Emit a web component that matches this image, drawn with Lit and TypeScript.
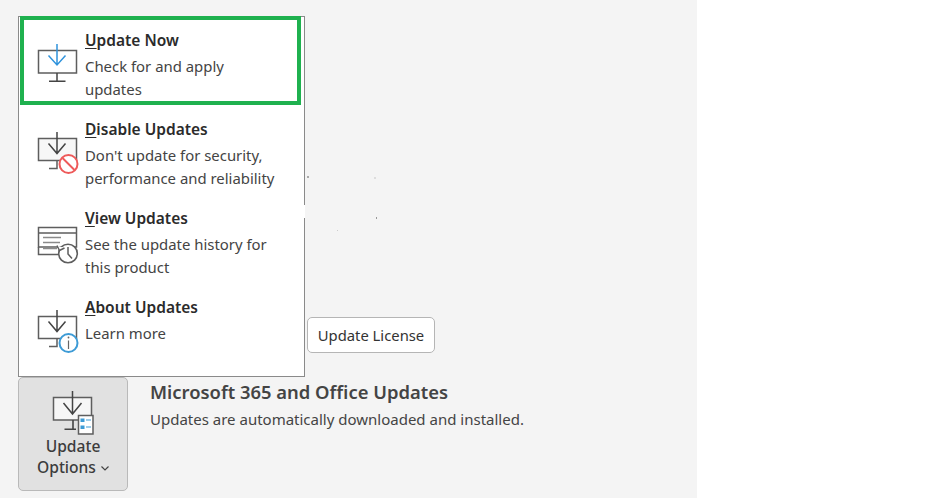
import { LitElement, html, css, svg } from "lit";
import { customElement } from "lit/decorators.js";

const GRAY = "#5e5e5e";
const DARK = "#444";

const iconNow = svg`
  <path d="M2.5 10.5H40.5V33H2.5Z" fill="#fff" stroke="${GRAY}" stroke-width="1.5"/>
  <path d="M21 33V41M13 41.3H29.5" fill="none" stroke="${DARK}" stroke-width="1.5"/>
  <path d="M21 4V25M12.5 15.5L21 25L29.5 15.5" fill="none" stroke="#2f93dc" stroke-width="1.5"/>`;

const iconDisable = svg`
  <path d="M2.5 9.5H40.5V31.5H2.5Z" fill="#f7f7f7" stroke="${GRAY}" stroke-width="1.5"/>
  <path d="M21 31.5V39.5H13" fill="none" stroke="${GRAY}" stroke-width="1.5"/>
  <path d="M21 3V24.5M12.5 14.5L21 24.5L29.5 14.5" fill="none" stroke="${DARK}" stroke-width="1.5"/>
  <circle cx="32.5" cy="35" r="9" fill="#fff" stroke="#ee5a5a" stroke-width="2"/>
  <path d="M26.5 29L38.5 41" stroke="#ee5a5a" stroke-width="2"/>`;

const iconView = svg`
  <path d="M2.5 9.5H40.5V29H2.5ZM2.5 15H40.5" fill="#fff" stroke="${GRAY}" stroke-width="1.5"/>
  <path d="M2.5 29V36.5H24" fill="none" stroke="${GRAY}" stroke-width="1.5"/>
  <path d="M7 19.5H25M7 24.5H24M7 30.5H21" fill="none" stroke="#8a8a8a" stroke-width="1.4"/>
  <circle cx="32" cy="35.5" r="9.3" fill="#fff" stroke="${GRAY}" stroke-width="1.6"/>
  <path d="M21 27.5L23.5 32.5L28.5 30" fill="#fff" stroke="${GRAY}" stroke-width="1.4"/>
  <path d="M32 29V36L36 40.5" fill="none" stroke="${GRAY}" stroke-width="1.5"/>`;

const iconAbout = svg`
  <path d="M2.5 9.5H40.5V31.5H2.5Z" fill="#fff" stroke="${GRAY}" stroke-width="1.5"/>
  <path d="M21 31.5V39.5H13" fill="none" stroke="${GRAY}" stroke-width="1.5"/>
  <path d="M21 3V24.5M12.5 14.5L21 24.5L29.5 14.5" fill="none" stroke="${DARK}" stroke-width="1.5"/>
  <circle cx="32.5" cy="36" r="9" fill="#fff" stroke="#3d9bd6" stroke-width="2"/>
  <path d="M32.5 33.5V42" stroke="#666" stroke-width="1.2"/>
  <circle cx="32.5" cy="30.5" r="0.9" fill="#666"/>`;

const iconOptions = svg`
  <path d="M1.5 7.5H39.5V30H1.5Z" fill="#f6f6f6" stroke="${GRAY}" stroke-width="1.5"/>
  <path d="M20.5 1V24M11.5 13L20.5 24L29.5 13" fill="none" stroke="${DARK}" stroke-width="1.5"/>
  <path d="M21 30V39M12.5 39.3H24" fill="none" stroke="${DARK}" stroke-width="1.6"/>
  <path d="M26.5 25.5H41V44H26.5Z" fill="#fff" stroke="${GRAY}" stroke-width="1.5"/>
  <path d="M28.5 28.5H32.5V32H28.5ZM28.5 35.5H32.5V39H28.5Z" fill="#3d9bd6"/>
  <path d="M34 30H39M34 37H39" stroke="#3d9bd6" stroke-width="1.2"/>`;

const items = [
  { key: "U", rest: "pdate Now", desc: "Check for and apply updates", icon: iconNow },
  { key: "D", rest: "isable Updates", desc: "Don't update for security, performance and reliability", icon: iconDisable },
  { key: "V", rest: "iew Updates", desc: "See the update history for this product", icon: iconView },
  { key: "A", rest: "bout Updates", desc: "Learn more", icon: iconAbout },
];

const specks = [
  { x: 307, y: 176, w: 2, h: 2, c: "#aaa" },
  { x: 374, y: 177, w: 2, h: 2, c: "#ddd" },
  { x: 376, y: 217, w: 1, h: 2, c: "#999" },
  { x: 337, y: 230, w: 1, h: 1, c: "#ccc" },
];

@customElement("app-root")
export class AppRoot extends LitElement {
  static styles = css`
    :host {
      display: block;
      position: relative;
      width: 936px;
      height: 498px;
      overflow: hidden;
      background: #fff;
      font-family: "Noto Sans", "Open Sans", sans-serif;
      color: #404040;
    }
    .panel {
      box-sizing: border-box;
      width: 697px;
      height: 498px;
      background: #f4f4f4;
      padding: 317px 0 0 18px;
      display: flex;
      flex-direction: column;
    }
    .license {
      box-sizing: border-box;
      align-self: flex-start;
      margin-left: 289px;
      width: 128px;
      height: 36px;
      background: #fff;
      border: 1px solid #b5b5b5;
      border-radius: 5px;
      font: inherit;
      font-size: 14.8px;
      color: #333;
      padding: 0;
    }
    .row {
      display: flex;
      margin-top: 24px;
      gap: 22px;
    }
    .options {
      box-sizing: border-box;
      width: 110px;
      height: 114px;
      background: #e1e1e1;
      border: 1px solid #b9b9b9;
      border-radius: 5px;
      padding: 12px 0 0;
      font: inherit;
      font-size: 15.6px;
      font-weight: 500;
      line-height: 21px;
      color: #3c3c3c;
      display: flex;
      flex-direction: column;
      align-items: center;
    }
    .opt-icon {
      flex: none;
      width: 44px;
      height: 46px;
      margin-left: 1px;
    }
    .chev {
      width: 8px;
      height: 5px;
      margin: 0 0 2px 1px;
    }
    .info {
      padding-top: 3px;
    }
    .info h2 {
      margin: 0;
      font-size: 18.4px;
      line-height: 24px;
      font-weight: 600;
      color: #444;
    }
    .info p {
      margin: 5px 0 0;
      font-size: 15px;
      line-height: 20px;
      color: #444;
    }
    .menu {
      box-sizing: border-box;
      position: absolute;
      left: 18px;
      top: 16px;
      width: 287px;
      height: 361px;
      background: #fff;
      border: 1px solid #8a8a8a;
    }
    .item {
      position: relative;
      height: 89px;
      display: flex;
      box-sizing: border-box;
      padding: 12px 0 0 17px;
    }
    .item:first-child::after {
      content: "";
      position: absolute;
      left: 1px;
      top: -1px;
      width: 281px;
      height: 89px;
      box-sizing: border-box;
      border: 4px solid #1fb14f;
    }
    .menu-icon {
      width: 44px;
      height: 44px;
      flex: none;
      margin-top: 11px;
      margin-right: 5px;
      overflow: visible;
    }
    .title {
      font-size: 15.5px;
      font-weight: 600;
      line-height: 22px;
      color: #2b2b2b;
    }
    .title u {
      text-underline-offset: 2px;
    }
    .desc {
      margin-top: 4px;
      max-width: 195px;
      font-size: 14.9px;
      line-height: 22.5px;
      color: #444;
    }
    .gap {
      position: absolute;
      left: 304px;
      top: 205px;
      width: 1px;
      height: 13px;
      background: #fff;
    }
    .speck {
      position: absolute;
    }
  `;

  render() {
    return html`
      <div class="panel">
        <button class="license">Update License</button>
        <div class="row">
          <button class="options">
            <svg class="opt-icon" viewBox="0 0 44 46">${iconOptions}</svg>
            <span>Update</span>
            <span>Options <svg class="chev" viewBox="0 0 8 5"><path d="M0.5 0.5L4 4L7.5 0.5" fill="none" stroke="#444" stroke-width="1.2"/></svg></span>
          </button>
          <div class="info">
            <h2>Microsoft 365 and Office Updates</h2>
            <p>Updates are automatically downloaded and installed.</p>
          </div>
        </div>
      </div>
      <div class="menu">
        ${items.map(
          (it) => html`
            <div class="item">
              <svg class="menu-icon" viewBox="0 0 44 44">${it.icon}</svg>
              <div>
                <div class="title"><u>${it.key}</u>${it.rest}</div>
                <div class="desc">${it.desc}</div>
              </div>
            </div>
          `
        )}
      </div>
      <div class="gap"></div>
      ${specks.map(
        (s) => html`<div class="speck" style="left:${s.x}px;top:${s.y}px;width:${s.w}px;height:${s.h}px;background:${s.c}"></div>`
      )}
    `;
  }
}
